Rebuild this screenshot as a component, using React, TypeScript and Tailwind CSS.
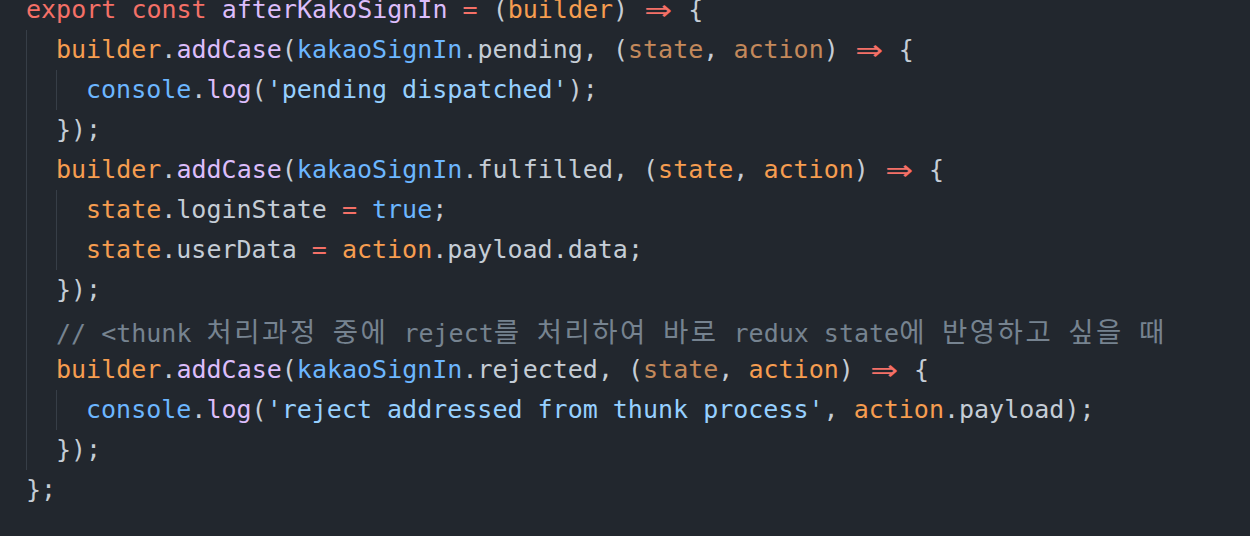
import React from "react";

type Tok = [string, string];

const KW = "text-[#f47067]";
const FN = "text-[#dcbdfb]";
const ID = "text-[#6cb6ff]";
const STR = "text-[#96d0ff]";
const VAR = "text-[#f69d50]";
const DIM = "text-[#c4895b]";
const TXT = "text-[#c5cdd6]";
const CM = "text-[#768390]";
const ARROW = "__arrow__";

const lines: { depth: number; toks: Tok[] }[] = [
  {
    depth: 0,
    toks: [
      ["export", KW], [" ", TXT], ["const", KW], [" ", TXT], ["afterKakoSignIn", FN], [" ", TXT],
      ["=", KW], [" (", TXT], ["builder", VAR], [") ", TXT], [ARROW, KW], [" {", TXT],
    ],
  },
  {
    depth: 1,
    toks: [
      ["builder", VAR], [".", TXT], ["addCase", FN], ["(", TXT], ["kakaoSignIn", ID], [".pending, (", TXT],
      ["state", DIM], [", ", TXT], ["action", DIM], [") ", TXT], [ARROW, KW], [" {", TXT],
    ],
  },
  {
    depth: 2,
    toks: [["console", ID], [".", TXT], ["log", FN], ["(", TXT], ["'pending dispatched'", STR], [");", TXT]],
  },
  { depth: 1, toks: [["});", TXT]] },
  {
    depth: 1,
    toks: [
      ["builder", VAR], [".", TXT], ["addCase", FN], ["(", TXT], ["kakaoSignIn", ID], [".fulfilled, (", TXT],
      ["state", VAR], [", ", TXT], ["action", VAR], [") ", TXT], [ARROW, KW], [" {", TXT],
    ],
  },
  {
    depth: 2,
    toks: [["state", VAR], [".loginState ", TXT], ["=", KW], [" ", TXT], ["true", ID], [";", TXT]],
  },
  {
    depth: 2,
    toks: [["state", VAR], [".userData ", TXT], ["=", KW], [" ", TXT], ["action", VAR], [".payload.data;", TXT]],
  },
  { depth: 1, toks: [["});", TXT]] },
  {
    depth: 1,
    toks: [["// <thunk 처리과정 중에 reject를 처리하여 바로 redux state에 반영하고 싶을 때", CM]],
  },
  {
    depth: 1,
    toks: [
      ["builder", VAR], [".", TXT], ["addCase", FN], ["(", TXT], ["kakaoSignIn", ID], [".rejected, (", TXT],
      ["state", DIM], [", ", TXT], ["action", VAR], [") ", TXT], [ARROW, KW], [" {", TXT],
    ],
  },
  {
    depth: 2,
    toks: [
      ["console", ID], [".", TXT], ["log", FN], ["(", TXT], ["'reject addressed from thunk process'", STR],
      [", ", TXT], ["action", VAR], [".payload);", TXT],
    ],
  },
  { depth: 1, toks: [["});", TXT]] },
  { depth: 0, toks: [["};", TXT]] },
];

const HANGUL = /([\uAC00-\uD7A3]+)/;

// hangul runs get their own font, spaced out to the editor's double-width cell
const renderText = (s: string) =>
  s.split(HANGUL).map((part, i) =>
    i % 2 === 1 ? (
      <span key={i} className="font-['Noto_Sans_CJK_KR',sans-serif] text-[27.5px] tracking-[2.5px]">
        {part}
      </span>
    ) : (
      <React.Fragment key={i}>{part}</React.Fragment>
    )
  );

const App = () => {
  return (
    <div className="w-[1250px] h-[536px] overflow-hidden bg-[#22272e]">
      <div className="-mt-[10px] pl-[26px] flex flex-col font-['DejaVu_Sans_Mono',monospace] text-[25px] leading-[40px]">
        {lines.map((line, li) => (
          <div key={li} className="flex h-10 whitespace-pre">
            {Array.from({ length: line.depth }).map((_, d) => (
              <div key={d} className="w-[30px] h-full shrink-0 border-l border-[#373e47]" />
            ))}
            <div className="h-full">
              {line.toks.map(([text, cls], ti) =>
                text === ARROW ? (
                  <span
                    key={ti}
                    className={`inline-flex h-10 w-[30px] items-center justify-center align-top ${cls}`}
                  >
                    <span className="scale-x-[1.15] font-['DejaVu_Sans',sans-serif] text-[29px] leading-none">
                      ⇒
                    </span>
                  </span>
                ) : (
                  <span key={ti} className={cls}>
                    {renderText(text)}
                  </span>
                )
              )}
            </div>
          </div>
        ))}
      </div>
    </div>
  );
};

export default App;
